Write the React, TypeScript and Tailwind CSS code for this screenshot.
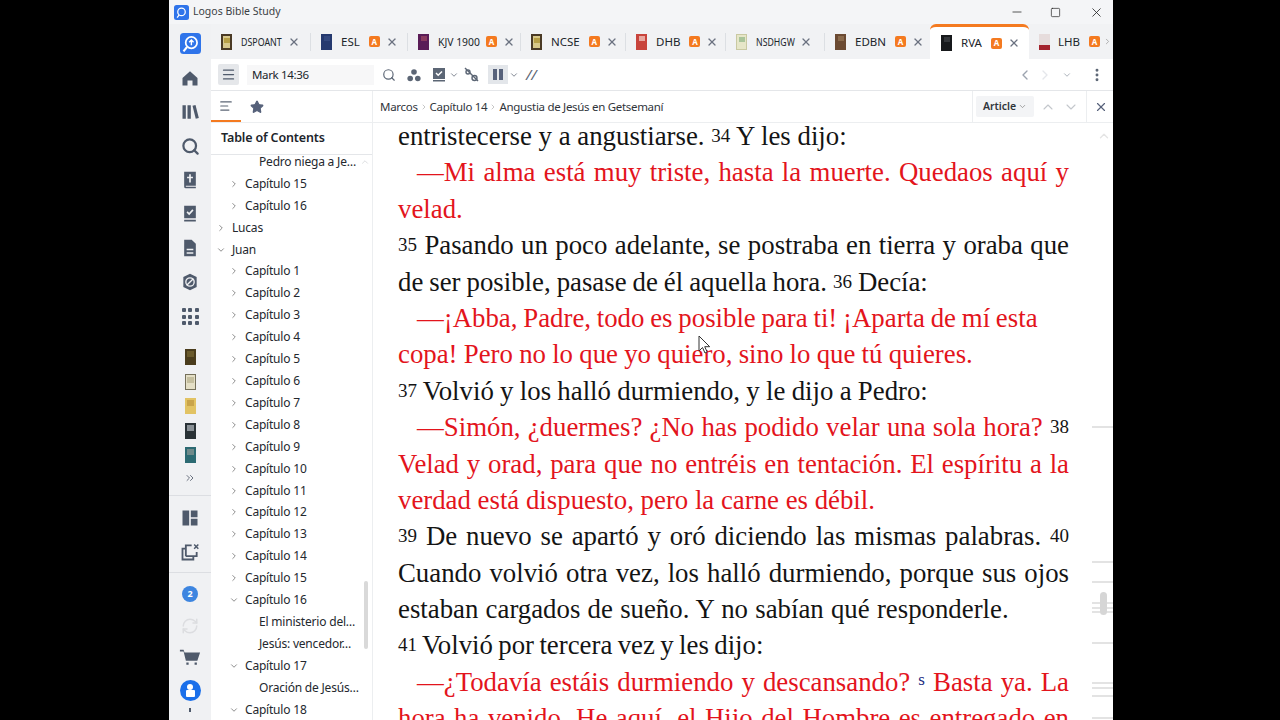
import React from "react";
import { ChevronRight, ChevronDown, ChevronUp, ChevronLeft, X, Search, Menu, EllipsisVertical, Minus, Square, ChevronsRight, Star, AlignLeft, RefreshCw } from "lucide-react";

const sans = "font-['Noto_Sans',sans-serif]";
const ICON = "#4f5a6b";

type Tab = { n: string; w: string; cover: string; inner?: string; lw?: string; sx?: string; badge?: boolean; active?: boolean; sep?: boolean };
const tabs: Tab[] = [
  { n: "DSPOANT", w: "w-[100px]", cover: "bg-[#d8c88c] border-2 border-[#4a3a25]", inner: "bg-[#b79f45]", lw: "w-[41px]", sx: "scale-x-[0.77]", sep: true },
  { n: "ESL", w: "w-[97px]", cover: "bg-[#25396f]", inner: "bg-[#33487f]", badge: true, sep: true },
  { n: "KJV 1900", w: "w-[113px]", cover: "bg-[#5a1c57]", inner: "bg-[#8a3a5f]", lw: "w-[39px]", sx: "scale-x-[0.9]", badge: true, sep: true },
  { n: "NCSE", w: "w-[105px]", cover: "bg-[#d8c888] border-2 border-[#4a3a25]", inner: "bg-[#b79f45]", badge: true, sep: true },
  { n: "DHB", w: "w-[100px]", cover: "bg-[#c8443c]", inner: "bg-[#e8a8a0]", badge: true, sep: true },
  { n: "NSDHGW", w: "w-[99px]", cover: "bg-[#e6e6c8] border border-[#c9c9a2]", inner: "bg-[#a9c49a]", lw: "w-[38px]", sx: "scale-x-[0.76]", sep: true },
  { n: "EDBN", w: "w-[106px]", cover: "bg-[#6b4a32]", inner: "bg-[#8a6a4c]", badge: true },
  { n: "RVA", w: "w-[99px]", cover: "bg-[#17191c]", inner: "bg-[#33363a]", badge: true, active: true },
];

function Cover({ c, inner }: { c: string; inner?: string }) {
  return (
    <span className={`flex items-start justify-center pt-[2px] w-[11px] h-[16px] shrink-0 ${c}`}>
      {inner && <span className={`block w-[6px] h-[5px] ${inner}`} />}
    </span>
  );
}
function Badge() {
  return <span className="flex items-center justify-center w-[11px] h-[11px] rounded-[2px] bg-[#f47a20] text-white text-[8px] font-bold leading-none shrink-0">A</span>;
}
function TabItem({ t }: { t: Tab }) {
  return (
    <div className={`relative flex items-center h-full shrink-0 ${t.w} ${t.active ? "bg-white rounded-t-[6px] border-t-[3px] border-[#f47a20] pl-[11px] -ml-px" : "pl-[10px]"}`}>
      <Cover c={t.cover} inner={t.inner} />
      <span className={`ml-[9px] text-[11.5px] text-[#20252b] leading-none whitespace-nowrap ${t.lw ?? ""}`}>
        <span className={`inline-block origin-left ${t.sx ?? ""}`}>{t.n}</span>
      </span>
      {t.badge && <span className="ml-[9px]"><Badge /></span>}
      <X size={12} strokeWidth={2.6} color="#6b7280" className="ml-[6px] shrink-0" />
      {t.sep && <span className="absolute right-0 top-[9px] h-[18px] w-px bg-[#dcdfe3]" />}
    </div>
  );
}

type Row = { t: string; l: 1 | 2 | 3; open?: boolean };
const caps = (a: number, b: number): Row[] => Array.from({ length: b - a + 1 }, (_, i) => ({ t: `Capítulo ${a + i}`, l: 2 as const }));
const rows: Row[] = [
  { t: "Pedro niega a Je…", l: 3 },
  ...caps(15, 16),
  { t: "Lucas", l: 1 },
  { t: "Juan", l: 1, open: true },
  ...caps(1, 15),
  { t: "Capítulo 16", l: 2, open: true },
  { t: "El ministerio del…", l: 3 },
  { t: "Jesús: vencedor…", l: 3 },
  { t: "Capítulo 17", l: 2, open: true },
  { t: "Oración de Jesús…", l: 3 },
  { t: "Capítulo 18", l: 2, open: true },
];
function TocRow({ r }: { r: Row }) {
  const pad = r.l === 1 ? "pl-[5px]" : r.l === 2 ? "pl-[18px]" : "pl-[48px]";
  return (
    <div className={`flex items-center h-[21.92px] ${pad}`}>
      {r.l !== 3 && (
        <span className="w-[16px] shrink-0 flex items-center">
          {r.open ? <ChevronDown size={10} strokeWidth={2} color="#777" /> : <ChevronRight size={10} strokeWidth={2} color="#777" />}
        </span>
      )}
      <span className="text-[12px] text-[#24282e] leading-none whitespace-nowrap tracking-[-0.2px]">{r.t}</span>
    </div>
  );
}

type Seg = { c?: "r" | "k" | "n"; v?: boolean; t: string };
const R = (t: string): Seg => ({ c: "r", t });
const K = (t: string): Seg => ({ c: "k", t });
const V = (t: string): Seg => ({ c: "k", v: true, t });
const lines: { s: Seg[]; j?: boolean; ind?: boolean; ws?: string }[] = [
  { s: [K("entristecerse y a angustiarse. "), V("34"), K(" Y les dijo:")] },
  { s: [R("—Mi alma está muy triste, hasta la muerte. Quedaos aquí y")], j: true, ind: true },
  { s: [R("velad.")] },
  { s: [V("35"), K(" Pasando un poco adelante, se postraba en tierra y oraba que")], j: true },
  { s: [K("de ser posible, pasase de él aquella hora. "), V("36"), K(" Decía:")], ws: "[word-spacing:-0.7px]" },
  { s: [R("—¡Abba, Padre, todo es posible para ti! ¡Aparta de mí esta")], ind: true, ws: "[word-spacing:-0.9px]" },
  { s: [R("copa! Pero no lo que yo quiero, sino lo que tú quieres.")], ws: "[word-spacing:-0.45px]" },
  { s: [V("37"), K(" Volvió y los halló durmiendo, y le dijo a Pedro:")], ws: "[word-spacing:-0.4px]" },
  { s: [R("—Simón, ¿duermes? ¿No has podido velar una sola hora? "), V("38")], j: true, ind: true },
  { s: [R("Velad y orad, para que no entréis en tentación. El espíritu a la")], j: true },
  { s: [R("verdad está dispuesto, pero la carne es débil.")] },
  { s: [V("39"), K(" De nuevo se apartó y oró diciendo las mismas palabras. "), V("40")], j: true },
  { s: [K("Cuando volvió otra vez, los halló durmiendo, porque sus ojos")], j: true },
  { s: [K("estaban cargados de sueño. Y no sabían qué responderle.")], ws: "[word-spacing:0.55px]" },
  { s: [V("41"), K(" Volvió por tercera vez y les dijo:")], ws: "[word-spacing:-1.3px]" },
  { s: [R("—¿Todavía estáis durmiendo y descansando? "), { c: "n", v: true, t: "s" }, R(" Basta ya. La")], j: true, ind: true },
  { s: [R("hora ha venido. He aquí, el Hijo del Hombre es entregado en")], j: true },
];

function Rail({ children, cls = "h-[34px]" }: { children: React.ReactNode; cls?: string }) {
  return <div className={`flex items-center justify-center w-full shrink-0 ${cls}`}>{children}</div>;
}
function Ico({ children, s = 20 }: { children: React.ReactNode; s?: number }) {
  return <svg width={s} height={s} viewBox="0 0 24 24" fill={ICON}>{children}</svg>;
}
const thumb = (c: string, inner: string) => (
  <span className={`flex items-start justify-center pt-[2px] w-[11px] h-[16px] ${c}`}><span className={`block w-[7px] h-[6px] ${inner}`} /></span>
);

export default function App() {
  return (
    <div className={`flex w-[1280px] h-[720px] bg-black overflow-hidden ${sans}`}>
      <div className="w-[169px] shrink-0" />
      <div className="relative w-[944px] shrink-0 flex flex-col bg-[#f1f2f4] overflow-hidden">
        {/* title bar */}
        <div className="flex items-center h-[24px] bg-[#f4f5f7] shrink-0">
          <svg width="15" height="15" viewBox="0 0 24 24" className="ml-[5px]"><rect width="24" height="24" rx="4" fill="#2f74ea" /><circle cx="12" cy="11" r="6" fill="none" stroke="#fff" strokeWidth="2" /><path d="M8 16l-3 4" stroke="#fff" strokeWidth="2" /></svg>
          <span className="ml-[4px] text-[10.5px] text-[#3b3f45]">Logos Bible Study</span>
          <div className="ml-auto flex items-center">
            <Minus size={14} strokeWidth={1.3} color="#222" className="mr-[26px]" />
            <Square size={11} strokeWidth={1.5} color="#222" className="mr-[28px]" />
            <X size={15} strokeWidth={1.3} color="#222" className="mr-[9px]" />
          </div>
        </div>
        <div className="flex flex-1 min-h-0">
          {/* rail */}
          <div className="w-[42px] shrink-0 flex flex-col items-center bg-[#f0f1f3]">
            <Rail cls="h-[37px] pt-[2px]">
              <svg width="21" height="21" viewBox="0 0 24 24"><rect width="24" height="24" rx="4" fill="#2f74ea" /><circle cx="13" cy="11" r="6.5" fill="none" stroke="#fff" strokeWidth="2" /><path d="M13 8v6M10.5 10.5 13 8l2.5 2.5" fill="none" stroke="#fff" strokeWidth="1.6" /><path d="M8 16l-4 5" stroke="#fff" strokeWidth="2.4" /></svg>
            </Rail>
            <Rail><Ico><path d="M3 12 12 4l9 8v9h-6v-6H9v6H3z" /></Ico></Rail>
            <Rail><Ico><path d="M3 4h4v16H3zM9 4h4v16H9zM15 4.5l3.6-1 4 15.6-3.7 1z" /></Ico></Rail>
            <Rail><Search size={19} strokeWidth={2.8} color={ICON} /></Rail>
            <Rail><Ico s={20}><path d="M5 2h14v17H7v1h12v2H7a2 2 0 0 1-2-2z" /><path d="M11 5h2v3h2.500v2H13v5h-2v-5H8.500V8H11z" fill="#f0f1f3" /></Ico></Rail>
            <Rail><Ico s={20}><path d="M5 2h14v15H5zM5 19h14v2H5z" /><path d="m8.500 9.500 2.500 2.500 4.500-5" fill="none" stroke="#f0f1f3" strokeWidth="2" /></Ico></Rail>
            <Rail><Ico s={20}><path d="M5 2h9l5 5v15H5z" /><path d="M8 13h8v1.800H8zM8 17h8v1.800H8z" fill="#f0f1f3" /></Ico></Rail>
            <Rail><Ico s={20}><path d="M12 2l8 4v12l-8 4-8-4V6z" /><circle cx="12" cy="12" r="5" fill="none" stroke="#f0f1f3" strokeWidth="1.600" /><path d="m8 16 8-8" stroke="#f0f1f3" strokeWidth="1.600" /></Ico></Rail>
            <Rail cls="h-[35px]">
              <div className="grid grid-cols-3 gap-[2.500px]">
                {Array.from({ length: 9 }, (_, i) => <span key={i} className="w-[4px] h-[4px] rounded-[1px] bg-[#4f5a6b]" />)}
              </div>
            </Rail>
            <div className="flex flex-col items-center gap-[8.500px] mt-[15px]">
              {thumb("bg-[#4a3c1c]", "bg-[#6a5a2c]")}
              {thumb("bg-[#e4dfc6] border border-[#75705a]", "bg-[#c5bf9f]")}
              {thumb("bg-[#e2c363]", "bg-[#c9a44a]")}
              {thumb("bg-[#2a3236]", "bg-[#8a9196]")}
              {thumb("bg-[#2c6a72]", "bg-[#6f8a8a]")}
            </div>
            <Rail cls="h-[22px] mt-[4px]"><ChevronsRight size={12} color="#6b7280" /></Rail>
            <div className="w-full h-px bg-[#dcdee2] mt-[6px]" />
            <Rail cls="h-[44px]"><Ico s={20}><path d="M3 3h8v18H3zM13 3h8v8h-8zM13 13h8v8h-8z" /></Ico></Rail>
            <Rail cls="h-[23px]"><svg width="20" height="20" viewBox="0 0 24 24" fill="none" stroke={ICON} strokeWidth="2.200"><path d="M6 8H3v13h13v-3" /><path d="M7 17V4h7" /><path d="M7 17h13v-5" /><path d="m17 3 5 5m0-5-5 5" strokeWidth="1.800" /></svg></Rail>
            <div className="w-full h-px bg-[#dcdee2] mt-[9px]" />
            <Rail cls="h-[41px]"><span className="flex items-center justify-center w-[16px] h-[16px] rounded-full bg-[#3d85e0] text-white text-[9px] font-bold leading-none">2</span></Rail>
            <Rail cls="h-[23px]"><RefreshCw size={18} strokeWidth={2} color="#dcdde0" /></Rail>
            <Rail cls="h-[39px]"><Ico s={22}><path d="M1 4h4l1 3h17l-3 9H7.500L5 6H1zM8 18h2.500v2.500H8zM17 18h2.500v2.500H17z" /></Ico></Rail>
            <Rail cls="h-[29px]">
              <span className="relative flex items-center justify-center w-[21px] h-[21px] rounded-full bg-[#1a6fea]">
                <span className="absolute top-[4px] w-[6px] h-[6px] rounded-full bg-white" />
                <span className="absolute top-[10px] w-[9px] h-[7px] rounded-[1px] bg-white" />
              </span>
            </Rail>
            <span className="mt-[3px] w-[2px] h-[4px] bg-[#4f5a6b]" />
          </div>
          {/* main */}
          <div className="flex-1 min-w-0 flex flex-col">
            <div className="flex h-[35px] shrink-0 overflow-hidden">
              {tabs.map((t) => <TabItem key={t.n} t={t} />)}
              <div className="flex items-center pl-[10px] shrink-0">
                <Cover c="bg-[#e6dcdc] border-b-[5px] border-[#a3222c]" />
                <span className="ml-[8px] text-[11.5px] text-[#20252b] leading-none">LHB</span>
                <span className="ml-[9px]"><Badge /></span>
                <ChevronRight size={9} color="#999" className="ml-[3px]" />
              </div>
            </div>
            {/* toolbar */}
            <div className="flex items-center h-[32px] shrink-0 bg-white border-b border-[#e4e6e9]">
              <span className="ml-[7px] w-[21px] h-[21px] rounded-[2px] bg-[#e5e7ea] flex items-center justify-center"><Menu size={15} strokeWidth={2} color="#4f5a6b" /></span>
              <div className="ml-[8px] w-[127px] h-[20px] bg-[#f7f7f8] flex items-center pl-[5px] text-[11.500px] text-[#20252b] tracking-[-0.35px]">Mark 14:36</div>
              <Search size={14} strokeWidth={2} color="#5c6675" className="ml-[8px]" />
              <svg width="14" height="14" viewBox="0 0 14 14" fill="#5c6675" className="ml-[11px]"><circle cx="7" cy="4" r="2.800" /><circle cx="3.200" cy="10.500" r="2.800" /><circle cx="10.800" cy="10.500" r="2.800" /></svg>
              <svg width="14" height="15" viewBox="0 0 14 15" fill="#5c6675" className="ml-[11px]"><path d="M1 1h12v11H1zM1 13h12v1.500H1z" /><path d="m4 6 2.200 2.200L10 4.500" stroke="#fff" strokeWidth="1.500" fill="none" /></svg>
              <ChevronDown size={10} strokeWidth={2} color="#6b7280" className="ml-[3px]" />
              <svg width="15" height="15" viewBox="0 0 15 15" fill="none" stroke="#5c6675" strokeWidth="1.400" className="ml-[5px]"><path d="m1 1 13 13" /><circle cx="4" cy="5" r="2" /><circle cx="10.500" cy="11" r="2.500" /></svg>
              <span className="ml-[9px] w-[20px] h-[19px] bg-[#e3e6ea] flex items-center justify-center gap-[1.500px]"><span className="w-[4.500px] h-[11px] bg-[#56617a]" /><span className="w-[4.500px] h-[11px] bg-[#56617a]" /></span>
              <ChevronDown size={10} strokeWidth={2} color="#6b7280" className="ml-[1px]" />
              <span className="ml-[7px] text-[15px] italic text-[#5c6675] leading-none">//</span>
              <div className="ml-auto flex items-center">
                <ChevronLeft size={16} strokeWidth={2} color="#9ca3af" />
                <ChevronRight size={16} strokeWidth={2} color="#e5e7eb" className="ml-[4px]" />
                <ChevronDown size={10} strokeWidth={2} color="#9ca3af" className="ml-[9px]" />
                <EllipsisVertical size={16} strokeWidth={2.400} color="#5c6675" className="ml-[17px] mr-[8px]" />
              </div>
            </div>
            <div className="flex flex-1 min-h-0 bg-white">
              {/* toc */}
              <div className="relative w-[162px] shrink-0 flex flex-col border-r border-[#eceef0]">
                <div className="flex items-center h-[32px] shrink-0 border-b border-[#eceef0]">
                  <span className="flex items-center justify-center w-[30px] h-full border-b-2 border-[#f47a20]"><AlignLeft size={14} strokeWidth={2} color="#5c6675" /></span>
                  <Star size={14} fill="#56617a" color="#56617a" className="ml-[9px]" />
                </div>
                <div className="flex items-center h-[32px] shrink-0 pl-[10px] border-b border-[#e4e6e9] text-[12.500px] font-semibold text-[#20252b] tracking-[-0.15px]">Table of Contents</div>
                <div className="flex-1 min-h-0 overflow-hidden">
                  <div className="-mt-[4px]">{rows.map((r, i) => <TocRow key={i} r={r} />)}</div>
                </div>
                <ChevronUp size={10} color="#d5d7da" className="absolute right-[2px] top-[66px]" />
                <span className="absolute left-[153px] top-[490px] w-[4px] h-[68px] bg-[#d9d9d9] rounded-full" />
              </div>
              {/* reader */}
              <div className="relative flex-1 min-w-0 flex flex-col">
                <div className="flex items-center h-[32px] shrink-0 border-b border-[#eceef0]">
                  <div className="flex items-center ml-[7px] text-[11.500px] text-[#30353b] tracking-[-0.3px] whitespace-nowrap">
                    <span>Marcos</span><ChevronRight size={8} color="#aaa" className="mx-[2px]" /><span>Capítulo 14</span><ChevronRight size={8} color="#aaa" className="mx-[2px]" /><span>Angustia de Jesús en Getsemaní</span>
                  </div>
                  <div className="ml-auto h-full flex items-center border-l border-[#eceef0] pl-[3px]">
                    <span className="w-[58px] h-[21px] rounded-[2px] bg-[#f3f4f6] flex items-center justify-center gap-[2px] text-[10.500px] font-semibold text-[#30353b]">Article<ChevronDown size={9} color="#888" /></span>
                    <ChevronUp size={16} strokeWidth={1.600} color="#c3c7cc" className="ml-[6px]" />
                    <ChevronDown size={16} strokeWidth={1.600} color="#c3c7cc" className="ml-[7px]" />
                    <span className="ml-[7px] h-full w-px bg-[#eceef0]" />
                    <X size={14} strokeWidth={2} color="#56617a" className="ml-[7px] mr-[5px]" />
                  </div>
                </div>
                <div className="flex-1 min-h-0 overflow-hidden">
                  <div className="-mt-[5px] ml-[25px] w-[671px] font-['Liberation_Serif',serif] text-[26.800px] leading-[36.400px]">
                    {lines.map((l, i) => (
                      <div key={i} className={`h-[36.400px] ${l.j ? "text-justify [text-align-last:justify]" : ""} ${l.ind ? "pl-[19px]" : ""} ${l.ws ?? ""}`}>
                        {l.s.map((s, k) => (
                          <span key={k} className={`whitespace-pre-wrap ${s.c === "r" ? "text-[#e3141c]" : s.c === "n" ? "text-[#1c2a80] text-[17px] leading-none relative -top-[6px]" : "text-[#141414]"} ${s.v && s.c !== "n" ? "text-[19px] leading-none relative -top-[3px]" : ""}`}>{s.t}</span>
                        ))}
                      </div>
                    ))}
                  </div>
                </div>
                {/* margin marks */}
                <ChevronUp size={14} strokeWidth={2.400} color="#e5e5e5" className="absolute left-[724px] top-[38px]" />
                {[335, 470, 490, 511, 516, 520, 551, 591, 596, 604, 626].map((y) => (
                  <span key={y} className="absolute left-[719px] w-[21px] h-[2px] bg-[#e3e3e3]" style={{ top: y }} />
                ))}
                <span className="absolute left-[727px] top-[501px] w-[7px] h-[23px] rounded-full bg-[#d6d6d6]" />
              </div>
            </div>
          </div>
        </div>
        {/* mouse pointer */}
        <svg width="13" height="19" viewBox="0 0 13 19" className="absolute left-[529px] top-[335px]"><path d="M1 1v15l3.500-3.500 2.500 5.500 2.200-1-2.500-5.300h5z" fill="#fff" stroke="#333" strokeWidth="1" /></svg>
      </div>
      <div className="flex-1" />
    </div>
  );
}
